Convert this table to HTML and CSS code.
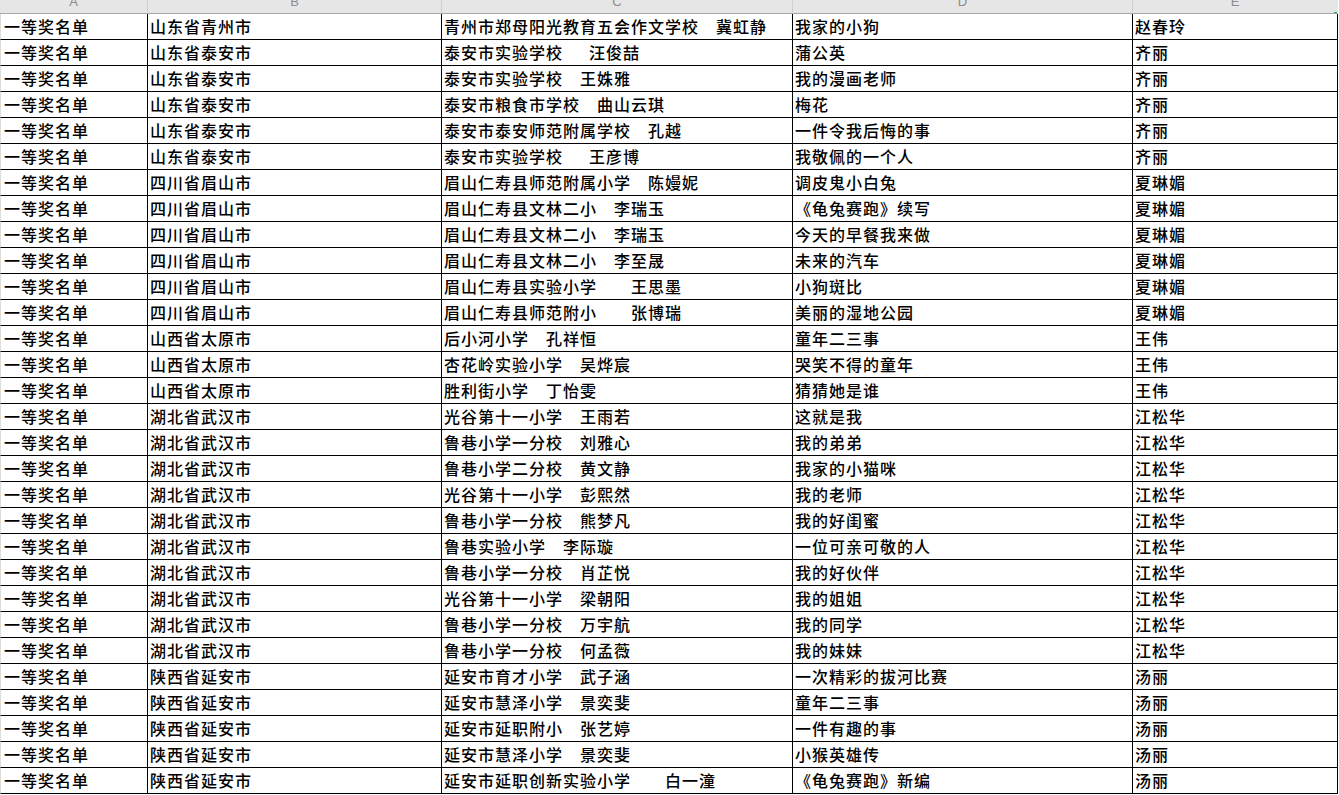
FILE: index.html
```html
<!DOCTYPE html>
<html lang="zh-CN">
<head>
<meta charset="utf-8">
<title>一等奖名单</title>
<link rel="stylesheet" href="styles.css">
</head>
<body>
<div class="sheet">
  <div class="hdr colA"><span>A</span></div>
  <div class="hdr"><span>B</span></div>
  <div class="hdr"><span>C</span></div>
  <div class="hdr"><span>D</span></div>
  <div class="hdr last"><span>E</span><i class="sel"></i></div>

  <div class="c colA">一等奖名单</div><div class="c">山东省青州市</div><div class="c">青州市郑母阳光教育五会作文学校　冀虹静</div><div class="c">我家的小狗</div><div class="c">赵春玲</div>
  <div class="c colA">一等奖名单</div><div class="c">山东省泰安市</div><div class="c">泰安市实验学校　&ensp;汪俊喆</div><div class="c">蒲公英</div><div class="c">齐丽</div>
  <div class="c colA">一等奖名单</div><div class="c">山东省泰安市</div><div class="c">泰安市实验学校　王姝雅</div><div class="c">我的漫画老师</div><div class="c">齐丽</div>
  <div class="c colA">一等奖名单</div><div class="c">山东省泰安市</div><div class="c">泰安市粮食市学校　曲山云琪</div><div class="c">梅花</div><div class="c">齐丽</div>
  <div class="c colA">一等奖名单</div><div class="c">山东省泰安市</div><div class="c">泰安市泰安师范附属学校　孔越</div><div class="c">一件令我后悔的事</div><div class="c">齐丽</div>
  <div class="c colA">一等奖名单</div><div class="c">山东省泰安市</div><div class="c">泰安市实验学校　&ensp;王彦博</div><div class="c">我敬佩的一个人</div><div class="c">齐丽</div>
  <div class="c colA">一等奖名单</div><div class="c">四川省眉山市</div><div class="c">眉山仁寿县师范附属小学　陈嫚妮</div><div class="c">调皮鬼小白兔</div><div class="c">夏琳媚</div>
  <div class="c colA">一等奖名单</div><div class="c">四川省眉山市</div><div class="c">眉山仁寿县文林二小　李瑞玉</div><div class="c">《龟兔赛跑》续写</div><div class="c">夏琳媚</div>
  <div class="c colA">一等奖名单</div><div class="c">四川省眉山市</div><div class="c">眉山仁寿县文林二小　李瑞玉</div><div class="c">今天的早餐我来做</div><div class="c">夏琳媚</div>
  <div class="c colA">一等奖名单</div><div class="c">四川省眉山市</div><div class="c">眉山仁寿县文林二小　李至晟</div><div class="c">未来的汽车</div><div class="c">夏琳媚</div>
  <div class="c colA">一等奖名单</div><div class="c">四川省眉山市</div><div class="c">眉山仁寿县实验小学　　王思墨</div><div class="c">小狗斑比</div><div class="c">夏琳媚</div>
  <div class="c colA">一等奖名单</div><div class="c">四川省眉山市</div><div class="c">眉山仁寿县师范附小　　张博瑞</div><div class="c">美丽的湿地公园</div><div class="c">夏琳媚</div>
  <div class="c colA">一等奖名单</div><div class="c">山西省太原市</div><div class="c">后小河小学　孔祥恒</div><div class="c">童年二三事</div><div class="c">王伟</div>
  <div class="c colA">一等奖名单</div><div class="c">山西省太原市</div><div class="c">杏花岭实验小学　吴烨宸</div><div class="c">哭笑不得的童年</div><div class="c">王伟</div>
  <div class="c colA">一等奖名单</div><div class="c">山西省太原市</div><div class="c">胜利街小学　丁怡雯</div><div class="c">猜猜她是谁</div><div class="c">王伟</div>
  <div class="c colA">一等奖名单</div><div class="c">湖北省武汉市</div><div class="c">光谷第十一小学　王雨若</div><div class="c">这就是我</div><div class="c">江松华</div>
  <div class="c colA">一等奖名单</div><div class="c">湖北省武汉市</div><div class="c">鲁巷小学一分校　刘雅心</div><div class="c">我的弟弟</div><div class="c">江松华</div>
  <div class="c colA">一等奖名单</div><div class="c">湖北省武汉市</div><div class="c">鲁巷小学二分校　黄文静</div><div class="c">我家的小猫咪</div><div class="c">江松华</div>
  <div class="c colA">一等奖名单</div><div class="c">湖北省武汉市</div><div class="c">光谷第十一小学　彭熙然</div><div class="c">我的老师</div><div class="c">江松华</div>
  <div class="c colA">一等奖名单</div><div class="c">湖北省武汉市</div><div class="c">鲁巷小学一分校　熊梦凡</div><div class="c">我的好闺蜜</div><div class="c">江松华</div>
  <div class="c colA">一等奖名单</div><div class="c">湖北省武汉市</div><div class="c">鲁巷实验小学　李际璇</div><div class="c">一位可亲可敬的人</div><div class="c">江松华</div>
  <div class="c colA">一等奖名单</div><div class="c">湖北省武汉市</div><div class="c">鲁巷小学一分校　肖芷悦</div><div class="c">我的好伙伴</div><div class="c">江松华</div>
  <div class="c colA">一等奖名单</div><div class="c">湖北省武汉市</div><div class="c">光谷第十一小学　梁朝阳</div><div class="c">我的姐姐</div><div class="c">江松华</div>
  <div class="c colA">一等奖名单</div><div class="c">湖北省武汉市</div><div class="c">鲁巷小学一分校　万宇航</div><div class="c">我的同学</div><div class="c">江松华</div>
  <div class="c colA">一等奖名单</div><div class="c">湖北省武汉市</div><div class="c">鲁巷小学一分校　何孟薇</div><div class="c">我的妹妹</div><div class="c">江松华</div>
  <div class="c colA">一等奖名单</div><div class="c">陕西省延安市</div><div class="c">延安市育才小学　武子涵</div><div class="c">一次精彩的拔河比赛</div><div class="c">汤丽</div>
  <div class="c colA">一等奖名单</div><div class="c">陕西省延安市</div><div class="c">延安市慧泽小学　景奕斐</div><div class="c">童年二三事</div><div class="c">汤丽</div>
  <div class="c colA">一等奖名单</div><div class="c">陕西省延安市</div><div class="c">延安市延职附小　张艺婷</div><div class="c">一件有趣的事</div><div class="c">汤丽</div>
  <div class="c colA">一等奖名单</div><div class="c">陕西省延安市</div><div class="c">延安市慧泽小学　景奕斐</div><div class="c">小猴英雄传</div><div class="c">汤丽</div>
  <div class="c colA">一等奖名单</div><div class="c">陕西省延安市</div><div class="c">延安市延职创新实验小学　　白一潼</div><div class="c">《龟兔赛跑》新编</div><div class="c">汤丽</div>
</div>
</body>
</html>
```
FILE: styles.css
```css
html, body {
  margin: 0;
  padding: 0;
  background: #ffffff;
  overflow: hidden;
}

.sheet {
  display: grid;
  grid-template-columns: 148px 294px 351px 340px 205px;
  grid-template-rows: 14px;
  grid-auto-rows: 26px;
  width: 1338px;
  font-family: "Noto Sans CJK SC", "Noto Sans CJK JP", sans-serif;
}

.hdr {
  box-sizing: border-box;
  height: 14px;
  background: #e6e6e6;
  border-right: 1px solid #d0d0d0;
  border-bottom: 1px solid #a8a8a8;
  overflow: hidden;
  text-align: center;
  font-family: "Liberation Sans", Arial, sans-serif;
  font-size: 13px;
  color: #8c8c8c;
  position: relative;
}

.hdr span {
  display: block;
  line-height: 14px;
  margin-top: -5px;
}

.hdr.last {
  border-right-color: #e6e6e6;
}

.sel {
  position: absolute;
  right: 0;
  bottom: -1px;
  width: 3px;
  height: 2px;
  background: #21a366;
}

.c {
  box-sizing: border-box;
  height: 26px;
  border-right: 1px solid #000000;
  border-bottom: 1px solid #000000;
  padding-left: 2px;
  font-size: 16px;
  font-weight: 500;
  letter-spacing: 1px;
  line-height: 25px;
  color: #000000;
  white-space: pre;
  overflow: hidden;
}

.colA {
  border-left: 1px solid #dcdcdc;
  padding-left: 3px;
}

.hdr.colA {
  border-left: none;
  padding-left: 0;
}
```
